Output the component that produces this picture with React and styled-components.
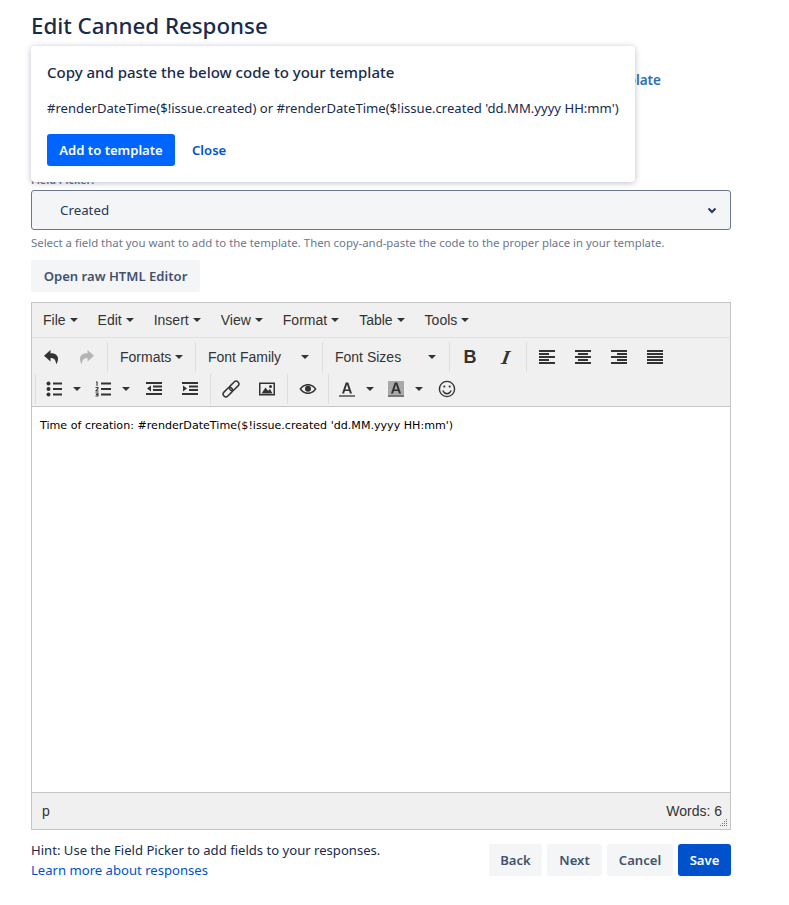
import React from "react";
import styled, { createGlobalStyle } from "styled-components";

const GlobalStyle = createGlobalStyle`
    body {
        margin: 0;
        background: #fff;
        font-family: "Noto Sans", "Open Sans", sans-serif;
        color: #172b4d;
    }
`;

const Page = styled.div`
    position: relative;
    width: 700px;
    padding: 11px 0 0 31px;
`;

const Title = styled.h1`
    margin: 0;
    height: 35px;
    font-size: 22.3px;
    line-height: 30px;
    font-weight: 500;
    color: #172b4d;
`;

const TemplateRow = styled.div`
    height: 58px;
    box-sizing: border-box;
    padding-top: 22px;
    display: flex;
    justify-content: flex-end;
    margin-right: 70px;
    font-size: 13.5px;
    line-height: 24px;
    font-weight: 600;
    color: #2f6fb0;
`;

const Label = styled.label`
    display: block;
    margin-top: 68px;
    height: 18px;
    font-size: 10.8px;
    line-height: 16px;
    font-weight: 600;
    color: #6b778c;
`;

const Popover = styled.div`
    position: absolute;
    left: 31px;
    top: 46px;
    width: 604px;
    height: 136px;
    box-sizing: border-box;
    padding: 16px;
    background: #fff;
    border-radius: 4px;
    box-shadow: 0 1px 6px rgba(9, 30, 66, 0.28);
`;

const PopoverTitle = styled.h2`
    margin: 0;
    font-size: 15px;
    line-height: 20px;
    font-weight: 500;
    color: #172b4d;
`;

const PopoverCode = styled.p`
    margin: 16px 0 0;
    font-size: 13.1px;
    line-height: 20px;
    color: #172b4d;
    white-space: nowrap;
`;

const PopoverActions = styled.div`
    display: flex;
    align-items: center;
    gap: 17px;
    margin-top: 16px;
`;

const PrimaryButton = styled.button`
    width: ${(props) => props.$w}px;
    height: 32px;
    padding: 0;
    border: 0;
    border-radius: 3px;
    background: ${(props) => props.$bg || "#0065ff"};
    color: #fff;
    font: 600 13.1px "Noto Sans", sans-serif;
`;

const LinkButton = styled.a`
    font-size: 13.1px;
    font-weight: 600;
    color: #0052cc;
`;

const FieldSelect = styled.div`
    display: flex;
    align-items: center;
    justify-content: space-between;
    height: 40px;
    box-sizing: border-box;
    padding: 0 12px 0 28px;
    background: #f4f5f7;
    border: 1px solid #6b778c;
    border-radius: 3px;
    font-size: 13.3px;
    color: #253858;
`;

const HelpText = styled.div`
    margin-top: 5px;
    font-size: 11.4px;
    line-height: 16px;
    color: #6b778c;
`;

const SubtleButton = styled.button`
    width: ${(props) => props.$w}px;
    height: 32px;
    padding: 0;
    border: 0;
    border-radius: 3px;
    background: #f4f5f7;
    color: #42526e;
    font: 600 13.1px "Noto Sans", sans-serif;
`;

const RawButton = styled(SubtleButton)`
    display: block;
    margin-top: 9px;
`;

const Editor = styled.div`
    margin-top: 10px;
    height: 528px;
    box-sizing: border-box;
    display: flex;
    flex-direction: column;
    border: 1px solid #c5c5c5;
    font-family: "Liberation Sans", Arial, sans-serif;
    color: #333;
`;

const MenuBar = styled.div`
    display: flex;
    align-items: center;
    height: 35px;
    padding-left: 11px;
    gap: 20px;
    background: #f0f0f0;
    border-bottom: 1px solid #e2e2e2;
    box-sizing: border-box;
    font-size: 14px;
`;

const MenuItem = styled.span`
    display: flex;
    align-items: center;
    gap: 4px;
    color: #333;
`;

const Caret = styled.i`
    display: inline-block;
    width: 0;
    height: 0;
    flex: none;
    border-left: 4px solid transparent;
    border-right: 4px solid transparent;
    border-top: 4px solid #333;
`;

const ToolbarArea = styled.div`
    height: 69px;
    box-sizing: border-box;
    padding-top: 3px;
    background: #f0f0f0;
    border-bottom: 1px solid #c5c5c5;
`;

const ToolRow = styled.div`
    display: flex;
    align-items: center;
    height: 32px;
    padding-left: ${(props) => props.$pad}px;
`;

const Sep = styled.span`
    width: 1px;
    height: 30px;
    margin: ${(props) => props.$m || "0 2px"};
    background: #dedede;
    flex: none;
`;

const IconBtn = styled.span`
    display: flex;
    align-items: center;
    justify-content: center;
    width: 36px;
    height: 30px;
    flex: none;
    margin-left: ${(props) => props.$ml || 0}px;
`;

const SplitBtn = styled.span`
    display: flex;
    align-items: center;
    width: 49px;
    height: 30px;
    flex: none;
    & > span {
        display: flex;
        justify-content: center;
        width: 36px;
    }
    & > i {
        margin-left: 1px;
    }
`;

const ListBox = styled.span`
    display: flex;
    align-items: center;
    justify-content: space-between;
    width: ${(props) => props.$w}px;
    box-sizing: border-box;
    padding: 0 ${(props) => props.$pr}px 0 12px;
    flex: none;
    font-size: 14px;
    color: #333;
`;

const EditorBody = styled.div`
    flex: 1;
    padding: 12px 8px 0;
    background: #fff;
    font-family: "DejaVu Sans", Verdana, sans-serif;
    font-size: 11.1px;
    line-height: 14px;
    color: #000;
`;

const StatusBar = styled.div`
    position: relative;
    display: flex;
    align-items: center;
    justify-content: space-between;
    height: 37px;
    box-sizing: border-box;
    padding: 0 8px 0 10px;
    background: #f0f0f0;
    border-top: 1px solid #c5c5c5;
    font-size: 14px;
`;

const Grip = styled.svg`
    position: absolute;
    right: 2px;
    bottom: 2px;
`;

const Footer = styled.div`
    display: flex;
    justify-content: space-between;
    margin-top: 10px;
`;

const Hint = styled.div`
    font-size: 13.1px;
    line-height: 20px;
    color: #172b4d;
    a {
        color: #0052cc;
    }
`;

const FooterActions = styled.div`
    display: flex;
    gap: 5px;
    margin-top: 4px;
`;

const BoldGlyph = styled.span`
    font: 700 18px "Liberation Sans", sans-serif;
    color: #333;
`;

const ItalicGlyph = styled.span`
    display: inline-block;
    transform: skewX(-10deg);
    font: italic 700 20px "Liberation Serif", serif;
    color: #333;
`;

const RedoSvg = styled.svg`
    transform: scaleX(-1);
`;

const Ico = ({ children, w = 16, h = 16 }) => (
    <svg width={w} height={h} viewBox={`0 0 ${w} ${h}`} fill="#333">
        {children}
    </svg>
);

const arrowPath = "M7.5 1 1 6.8l6.500 5.700V9c3.200 0 5.200 1.300 5.700 6.300 1-1.500 1.800-3.200 1.800-5.300C15 6 12 4.300 7.500 4.300z";

const Undo = () => (
    <Ico>
        <path d={arrowPath} />
    </Ico>
);

const Redo = () => (
    <RedoSvg width="16" height="16" viewBox="0 0 16 16">
        <path fill="#b5b5b5" d={arrowPath} />
    </RedoSvg>
);

const Lines = ({ rows }) => (
    <Ico>
        {rows.map(([x, w], i) => (
            <rect key={i} x={x} y={1 + i * 3} width={w} height="2" />
        ))}
    </Ico>
);

const Bullets = () => (
    <Ico>
        <circle cx="2.5" cy="2.5" r="2" />
        <circle cx="2.5" cy="8" r="2" />
        <circle cx="2.5" cy="13.5" r="2" />
        <rect x="7" y="1.5" width="9" height="2" />
        <rect x="7" y="7" width="9" height="2" />
        <rect x="7" y="12.5" width="9" height="2" />
    </Ico>
);

const Numbers = () => (
    <Ico>
        <path d="M1 .5h1.600v4.500H1.500V1.500H1zM.5 6h3v2L1.700 9.400h1.900v1H.5V9.300L2.400 7.500v-.5H.5zM.5 11.500h3v4h-3v-.9h2v-.7H1V13h1.500v-.6h-2z" />
        <rect x="6" y="1.5" width="10" height="2" />
        <rect x="6" y="7" width="10" height="2" />
        <rect x="6" y="12.5" width="10" height="2" />
    </Ico>
);

const Outdent = () => (
    <Ico>
        <rect y="1" width="16" height="2" />
        <rect x="7" y="4.5" width="9" height="2" />
        <rect x="7" y="8" width="9" height="2" />
        <rect y="12" width="16" height="2" />
        <path d="M5 4.500v6L1 7.500z" />
    </Ico>
);

const Indent = () => (
    <Ico>
        <rect y="1" width="16" height="2" />
        <rect x="7" y="4.5" width="9" height="2" />
        <rect x="7" y="8" width="9" height="2" />
        <rect y="12" width="16" height="2" />
        <path d="M1 4.500v6l4-3z" />
    </Ico>
);

const LinkIcon = () => (
    <svg width="18" height="18" viewBox="0 0 18 18" fill="none" stroke="#333" strokeWidth="1.5">
        <rect x="-5" y="-2.75" width="11" height="5.5" rx="2.75" transform="translate(5.5 12.5) rotate(-45)" />
        <rect x="-6" y="-2.75" width="11" height="5.5" rx="2.75" transform="translate(12.5 5.5) rotate(-45)" />
    </svg>
);

const ImageIcon = () => (
    <Ico>
        <path fillRule="evenodd" d="M0 1.500h16v13H0zM1.500 3v10h13V3z" />
        <path d="M2.500 12.500l4-6 2.500 3.200 2-1.700 2.500 4.500z" />
        <circle cx="11.5" cy="5.5" r="1.5" />
    </Ico>
);

const Eye = () => (
    <Ico w={18}>
        <path fillRule="evenodd" d="M9 3C5 3 2 5.500.5 8 2 10.500 5 13 9 13s7-2.500 8.500-5C16 5.500 13 3 9 3zM2.300 8C4 6 6 4.500 9 4.500S14 6 15.700 8C14 10 12 11.500 9 11.500S4 10 2.300 8z" />
        <circle cx="9" cy="7.8" r="3" />
    </Ico>
);

const FontColor = ({ bg }) => (
    <Ico>
        {bg && <rect width="16" height="14" fill="#a9a9a9" />}
        <rect y="14" width="16" height="2" fill="#777" />
        <path fillRule="evenodd" d="M6.700 1.500h2.600L13 12.500h-2.100l-.8-2.500H5.900l-.8 2.500H3zM6.400 8.400h3.200L8 3.500z" />
    </Ico>
);

const Smile = () => (
    <svg width="18" height="18" viewBox="0 0 18 18" fill="none" stroke="#333" strokeWidth="1.4">
        <circle cx="9" cy="9" r="7.6" />
        <path d="M4.800 10.500c1 2.200 2.400 3.200 4.200 3.200s3.200-1 4.200-3.200" />
        <circle cx="6.3" cy="6.5" r="1.1" fill="#333" stroke="none" />
        <circle cx="11.7" cy="6.5" r="1.1" fill="#333" stroke="none" />
    </svg>
);

const menus = ["File", "Edit", "Insert", "View", "Format", "Table", "Tools"];
const gripDots = [[8, 2], [6, 4], [8, 4], [4, 6], [6, 6], [8, 6], [2, 8], [4, 8], [6, 8], [8, 8]];

export default function App() {
    return (
        <Page>
            <GlobalStyle />
            <Title>Edit Canned Response</Title>
            <TemplateRow>Insert template</TemplateRow>
            <Label>Field Picker:</Label>
            <FieldSelect>
                Created
                <svg width="12" height="12" viewBox="0 0 12 12" fill="none" stroke="#253858" strokeWidth="2">
                    <path d="M2.500 4.500 6 8l3.500-3.500" />
                </svg>
            </FieldSelect>
            <HelpText>
                Select a field that you want to add to the template. Then copy-and-paste the code to the proper place in your template.
            </HelpText>
            <RawButton $w={169}>Open raw HTML Editor</RawButton>

            <Editor>
                <MenuBar>
                    {menus.map((m) => (
                        <MenuItem key={m}>
                            {m}
                            <Caret />
                        </MenuItem>
                    ))}
                </MenuBar>
                <ToolbarArea>
                    <ToolRow $pad={1}>
                        <IconBtn><Undo /></IconBtn>
                        <IconBtn><Redo /></IconBtn>
                        <Sep $m="0 0 0 2px" />
                        <ListBox $w={87} $pr={12}>Formats<Caret /></ListBox>
                        <Sep $m="0" />
                        <ListBox $w={126} $pr={13}>Font Family<Caret /></ListBox>
                        <Sep $m="0" />
                        <ListBox $w={126} $pr={13}>Font Sizes<Caret /></ListBox>
                        <Sep $m="0 2px 0 0" />
                        <IconBtn><BoldGlyph>B</BoldGlyph></IconBtn>
                        <IconBtn><ItalicGlyph>I</ItalicGlyph></IconBtn>
                        <Sep />
                        <IconBtn><Lines rows={[[0, 16], [0, 10], [0, 16], [0, 10], [0, 16]]} /></IconBtn>
                        <IconBtn><Lines rows={[[0, 16], [3, 10], [0, 16], [3, 10], [0, 16]]} /></IconBtn>
                        <IconBtn><Lines rows={[[0, 16], [6, 10], [0, 16], [6, 10], [0, 16]]} /></IconBtn>
                        <IconBtn><Lines rows={[[0, 16], [0, 16], [0, 16], [0, 16], [0, 16]]} /></IconBtn>
                    </ToolRow>
                    <ToolRow $pad={3}>
                        <Sep $m="0" />
                        <SplitBtn><span><Bullets /></span><Caret /></SplitBtn>
                        <SplitBtn><span><Numbers /></span><Caret /></SplitBtn>
                        <IconBtn $ml={2}><Outdent /></IconBtn>
                        <IconBtn><Indent /></IconBtn>
                        <Sep />
                        <IconBtn><LinkIcon /></IconBtn>
                        <IconBtn><ImageIcon /></IconBtn>
                        <Sep />
                        <IconBtn><Eye /></IconBtn>
                        <Sep $m="0 0 0 2px" />
                        <SplitBtn><span><FontColor /></span><Caret /></SplitBtn>
                        <SplitBtn><span><FontColor bg /></span><Caret /></SplitBtn>
                        <IconBtn $ml={2}><Smile /></IconBtn>
                    </ToolRow>
                </ToolbarArea>
                <EditorBody>Time of creation: #renderDateTime($!issue.created 'dd.MM.yyyy HH:mm')</EditorBody>
                <StatusBar>
                    <span>p</span>
                    <span>Words: 6</span>
                    <Grip width="10" height="10" viewBox="0 0 10 10" fill="#777">
                        {gripDots.map(([x, y]) => (
                            <rect key={`${x}-${y}`} x={x} y={y} width="1" height="1" />
                        ))}
                    </Grip>
                </StatusBar>
            </Editor>

            <Footer>
                <Hint>
                    Hint: Use the Field Picker to add fields to your responses.
                    <br />
                    <a>Learn more about responses</a>
                </Hint>
                <FooterActions>
                    <SubtleButton $w={53}>Back</SubtleButton>
                    <SubtleButton $w={55}>Next</SubtleButton>
                    <SubtleButton $w={66}>Cancel</SubtleButton>
                    <PrimaryButton $w={53} $bg="#0052cc">Save</PrimaryButton>
                </FooterActions>
            </Footer>

            <Popover>
                <PopoverTitle>Copy and paste the below code to your template</PopoverTitle>
                <PopoverCode>#renderDateTime($!issue.created) or #renderDateTime($!issue.created 'dd.MM.yyyy HH:mm')</PopoverCode>
                <PopoverActions>
                    <PrimaryButton $w={128}>Add to template</PrimaryButton>
                    <LinkButton>Close</LinkButton>
                </PopoverActions>
            </Popover>
        </Page>
    );
}
